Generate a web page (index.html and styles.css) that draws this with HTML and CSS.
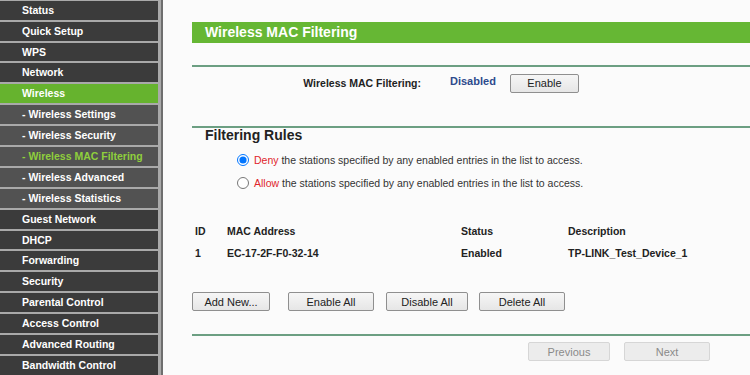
FILE: index.html
```html
<!DOCTYPE html>
<html>
<head>
<meta charset="utf-8">
<link rel="stylesheet" href="styles.css">
</head>
<body>
<div class="page">
  <nav class="sidebar">
    <div class="item">Status</div>
    <div class="item">Quick Setup</div>
    <div class="item">WPS</div>
    <div class="item">Network</div>
    <div class="item active">Wireless</div>
    <div class="item sub">- Wireless Settings</div>
    <div class="item sub">- Wireless Security</div>
    <div class="item sub current">- Wireless MAC Filtering</div>
    <div class="item sub">- Wireless Advanced</div>
    <div class="item sub">- Wireless Statistics</div>
    <div class="item">Guest Network</div>
    <div class="item">DHCP</div>
    <div class="item">Forwarding</div>
    <div class="item">Security</div>
    <div class="item">Parental Control</div>
    <div class="item">Access Control</div>
    <div class="item">Advanced Routing</div>
    <div class="item">Bandwidth Control</div>
  </nav>
  <main class="main">
    <div class="titlebar">Wireless MAC Filtering</div>
    <div class="rule rule1"></div>
    <div class="status-row">
      <div class="status-label">Wireless MAC Filtering:</div>
      <div class="status-value">Disabled</div>
      <button class="btn btn-enable">Enable</button>
    </div>
    <div class="rule rule2"></div>
    <h2 class="section">Filtering Rules</h2>
    <label class="radio-row first"><input type="radio" name="r" checked><span><span class="red">Deny</span> the stations specified by any enabled entries in the list to access.</span></label>
    <label class="radio-row"><input type="radio" name="r"><span><span class="red">Allow</span> the stations specified by any enabled entries in the list to access.</span></label>
    <div class="table">
      <div class="trow head"><span>ID</span><span>MAC Address</span><span>Status</span><span>Description</span></div>
      <div class="trow"><span>1</span><span>EC-17-2F-F0-32-14</span><span>Enabled</span><span>TP-LINK_Test_Device_1</span></div>
    </div>
    <div class="actions">
      <button class="btn w-add">Add New...</button>
      <button class="btn w-enall">Enable All</button>
      <button class="btn w-disall">Disable All</button>
      <button class="btn w-delall">Delete All</button>
    </div>
    <div class="rule rule3"></div>
    <div class="pager">
      <button class="btn disabled w-prev">Previous</button>
      <button class="btn disabled w-next">Next</button>
    </div>
  </main>
</div>
</body>
</html>
```
FILE: styles.css
```css
* { box-sizing: border-box; }
html, body { margin: 0; padding: 0; }
body {
  width: 750px;
  height: 375px;
  overflow: hidden;
  background: #fbfbfb;
  font-family: "Liberation Sans", Arial, sans-serif;
  color: #222;
}
.page {
  display: flex;
  height: 375px;
}
.sidebar {
  width: 163px;
  flex: none;
  background: #a9a9a9;
  border-right: 2px solid #6e6e6e;
  padding-right: 3px;
  padding-top: 0.8px;
  display: flex;
  flex-direction: column;
  gap: 2px;
  overflow: hidden;
}
.item {
  height: 18.9px;
  flex: none;
  background: #3b3b3b;
  color: #fff;
  font-weight: bold;
  font-size: 10.5px;
  line-height: 18.9px;
  padding-left: 22px;
  white-space: nowrap;
}
.item.sub { background: #525252; }
.item.active { background: #66b32e; }
.item.current { color: #8fcf3c; }

.main {
  flex: 1;
  padding: 22px 0 0 29px;
  min-width: 0;
}
.titlebar {
  height: 21px;
  background: #66b734;
  color: #fff;
  font-weight: bold;
  font-size: 14px;
  line-height: 21px;
  padding-left: 13px;
}
.rule {
  height: 2px;
  background: #6c9f82;
}
.rule1 { margin-top: 22px; }
.status-row {
  display: flex;
  align-items: center;
  height: 30px;
  margin-top: 1px;
}
.status-label {
  width: 229px;
  text-align: right;
  font-weight: bold;
  font-size: 10.5px;
  color: #222;
}
.status-value {
  margin-left: 29px;
  width: 47px;
  font-weight: bold;
  font-size: 11px;
  color: #2d4a8c;
  position: relative;
  top: -2px;
}
.btn {
  height: 19px;
  padding: 0;
  border: 1px solid #8f8f8f;
  border-radius: 2px;
  background: linear-gradient(#f6f6f6, #e6e6e6);
  font-family: "Liberation Sans", Arial, sans-serif;
  font-size: 11px;
  color: #222;
}
.btn-enable { margin-left: 13px; width: 69px; }
.rule2 { margin-top: 28px; }
.section {
  margin: -1px 0 0 13px;
  font-size: 14px;
  font-weight: bold;
  line-height: 16px;
  color: #222;
}
.radio-row {
  display: flex;
  align-items: center;
  gap: 5px;
  padding-left: 45px;
  font-size: 10.5px;
  color: #333;
  height: 23px;
}
.radio-row.first { margin-top: 5px; }
.radio-row input {
  margin: 0;
  width: 12px;
  height: 12px;
}
.red { color: #e0252b; }
.table {
  margin-top: 26px;
  padding-left: 3px;
  font-size: 10.5px;
  font-weight: bold;
}
.trow {
  display: grid;
  grid-template-columns: 32px 234px 107px auto;
  height: 22px;
  align-items: center;
}
.actions {
  display: flex;
  margin-top: 28px;
}
.w-add { width: 78px; }
.w-enall { width: 86px; margin-left: 18px; }
.w-disall { width: 82px; margin-left: 12px; }
.w-delall { width: 86px; margin-left: 11px; }
.rule3 { margin-top: 23px; }
.pager {
  display: flex;
  justify-content: flex-end;
  padding-right: 40px;
  margin-top: 6px;
}
.btn.disabled {
  background: #ececec;
  border-color: #d6d6d6;
  color: #8a8a8a;
}
.w-prev { width: 82px; }
.w-next { width: 86px; margin-left: 14px; }
```
